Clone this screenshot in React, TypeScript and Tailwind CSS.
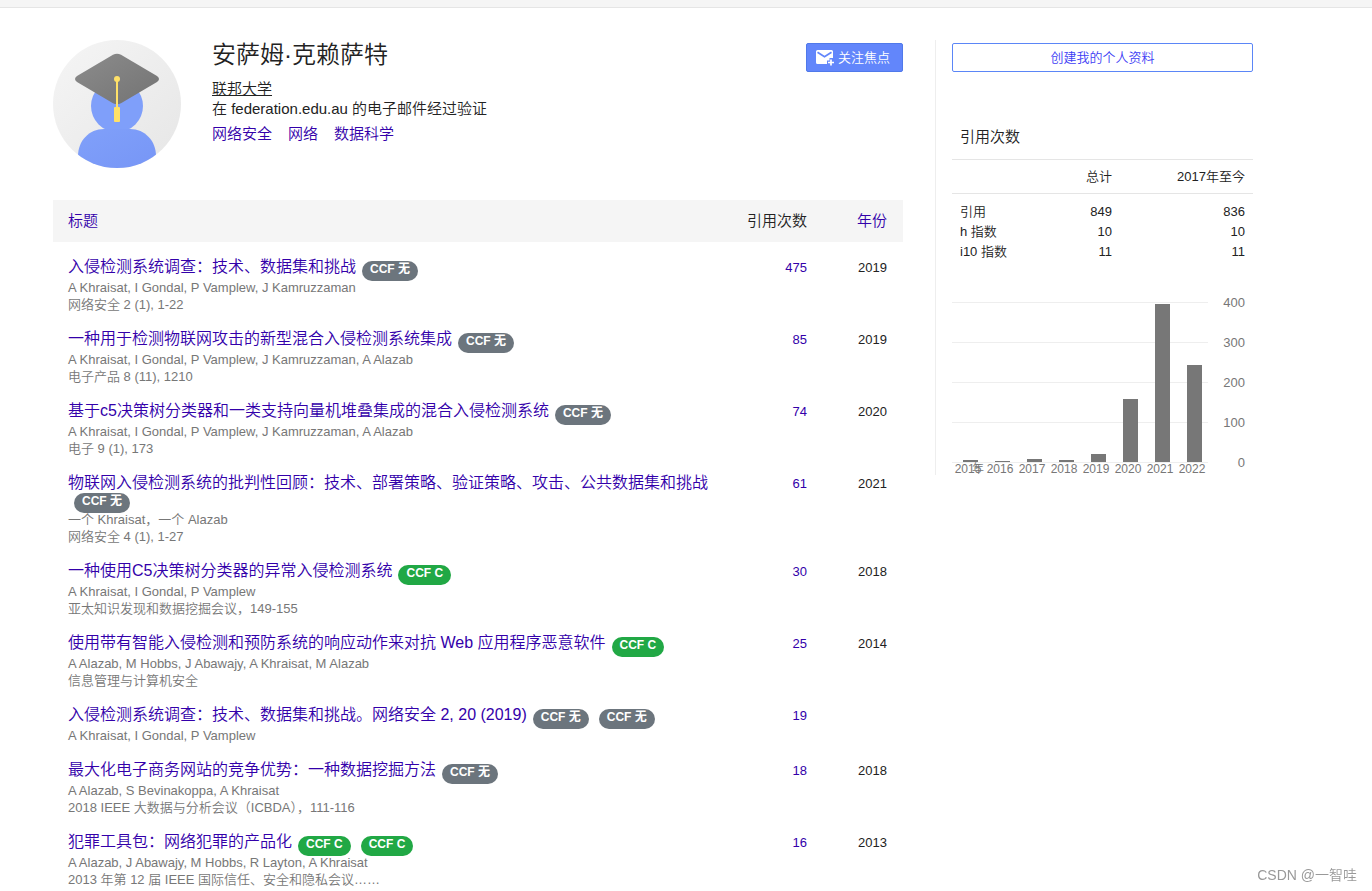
import React from 'react';
import clsx from 'clsx';

interface Article {
  title: string;
  authors: string;
  venue?: string;
  ranks: string[];
  cites: number;
  year?: number;
}

const articles: Article[] = [
  { title: '入侵检测系统调查：技术、数据集和挑战', authors: 'A Khraisat, I Gondal, P Vamplew, J Kamruzzaman', venue: '网络安全 2 (1), 1-22', ranks: ['无'], cites: 475, year: 2019 },
  { title: '一种用于检测物联网攻击的新型混合入侵检测系统集成', authors: 'A Khraisat, I Gondal, P Vamplew, J Kamruzzaman, A Alazab', venue: '电子产品 8 (11), 1210', ranks: ['无'], cites: 85, year: 2019 },
  { title: '基于c5决策树分类器和一类支持向量机堆叠集成的混合入侵检测系统', authors: 'A Khraisat, I Gondal, P Vamplew, J Kamruzzaman, A Alazab', venue: '电子 9 (1), 173', ranks: ['无'], cites: 74, year: 2020 },
  { title: '物联网入侵检测系统的批判性回顾：技术、部署策略、验证策略、攻击、公共数据集和挑战', authors: '一个 Khraisat，一个 Alazab', venue: '网络安全 4 (1), 1-27', ranks: ['无'], cites: 61, year: 2021 },
  { title: '一种使用C5决策树分类器的异常入侵检测系统', authors: 'A Khraisat, I Gondal, P Vamplew', venue: '亚太知识发现和数据挖掘会议，149-155', ranks: ['C'], cites: 30, year: 2018 },
  { title: '使用带有智能入侵检测和预防系统的响应动作来对抗 Web 应用程序恶意软件', authors: 'A Alazab, M Hobbs, J Abawajy, A Khraisat, M Alazab', venue: '信息管理与计算机安全', ranks: ['C'], cites: 25, year: 2014 },
  { title: '入侵检测系统调查：技术、数据集和挑战。网络安全 2, 20 (2019)', authors: 'A Khraisat, I Gondal, P Vamplew', ranks: ['无', '无'], cites: 19 },
  { title: '最大化电子商务网站的竞争优势：一种数据挖掘方法', authors: 'A Alazab, S Bevinakoppa, A Khraisat', venue: '2018 IEEE 大数据与分析会议（ICBDA），111-116', ranks: ['无'], cites: 18, year: 2018 },
  { title: '犯罪工具包：网络犯罪的产品化', authors: 'A Alazab, J Abawajy, M Hobbs, R Layton, A Khraisat', venue: '2013 年第 12 届 IEEE 国际信任、安全和隐私会议……', ranks: ['C', 'C'], cites: 16, year: 2013 },
];

const interests = ['网络安全', '网络', '数据科学'];

const metrics = [
  { label: '引用', total: 849, recent: 836 },
  { label: 'h 指数', total: 10, recent: 10 },
  { label: 'i10 指数', total: 11, recent: 11 },
];

const perYear = [
  { year: 2015, count: 5 },
  { year: 2016, count: 3 },
  { year: 2017, count: 8 },
  { year: 2018, count: 5 },
  { year: 2019, count: 20 },
  { year: 2020, count: 158 },
  { year: 2021, count: 395 },
  { year: 2022, count: 243 },
];

const ticks = [400, 300, 200, 100, 0];

const Avatar: React.FC = () => (
  <svg viewBox="0 0 128 128" className="size-32 shrink-0" aria-hidden="true">
    <defs>
      <linearGradient id="bg" x1="0" y1="0" x2="1" y2="1">
        <stop offset="0" stopColor="#f5f5f5" />
        <stop offset="1" stopColor="#e6e6e6" />
      </linearGradient>
      <linearGradient id="hat" x1="0" y1="0" x2="1" y2="1">
        <stop offset="0" stopColor="#8c8c8c" />
        <stop offset="1" stopColor="#737373" />
      </linearGradient>
      <linearGradient id="body" x1="0" y1="0" x2="1" y2="1">
        <stop offset="0" stopColor="#80a0fa" />
        <stop offset="1" stopColor="#7796f6" />
      </linearGradient>
      <clipPath id="round">
        <circle cx="64" cy="64" r="64" />
      </clipPath>
    </defs>
    <g clipPath="url(#round)">
      <rect width="128" height="128" fill="url(#bg)" />
      <circle cx="64" cy="66" r="26" fill="#7f9ffa" />
      <path d="M25 128V116C25 101 36 89 51 89H77C92 89 103 101 103 116V128Z" fill="url(#body)" />
      <path d="M60 14.700Q64 12.800 68 14.700L104 36Q108 39 104 42L68 63.300Q64 65.200 60 63.300L24 42Q20 39 24 36Z" fill="url(#hat)" />
      <path d="M64 39V70" stroke="#ffe168" strokeWidth="2" />
      <circle cx="64" cy="39" r="3" fill="#ffe168" />
      <rect x="61" y="67" width="6" height="15" rx="1" fill="#ffe168" />
    </g>
  </svg>
);

const MailPlusIcon: React.FC = () => (
  <svg viewBox="0 0 18 16" className="h-4 w-[18px]" aria-hidden="true">
    <path d="M1.500 0H15.500Q17 0 17 1.500V8H13.500V10.500H11V14H1.500Q0 14 0 12.500V1.500Q0 0 1.500 0Z" fill="#fff" />
    <path d="M1.500 2.200L8.500 6.800L15.500 2.200" fill="none" stroke="#6286fb" strokeWidth="1.700" />
    <path d="M15 9.500V15.500M12 12.500H18" stroke="#fff" strokeWidth="1.700" />
  </svg>
);

const RankBadge: React.FC<{ rank: string }> = ({ rank }) => (
  <span
    className={clsx(
      'mt-0.5 mr-1 -mb-1.5 ml-1.5 inline-block h-5 rounded-[10px] px-2 align-top text-xs leading-4 font-bold text-white',
      rank === '无' ? 'bg-[#6c757d]' : 'bg-[#21a845]'
    )}
  >
    CCF {rank}
  </span>
);

const ArticleTable: React.FC = () => (
  <table className="mt-8 w-full table-fixed text-[13px]">
    <thead className="h-[42px] bg-[#f5f5f5] text-[15px]">
      <tr>
        <th className="pl-[15px] text-left font-[350]">
          <a href="#title" className="text-[#3300aa]">标题</a>
        </th>
        <th className="w-24 pr-4 text-right font-[350]">引用次数</th>
        <th className="w-20 pr-4 text-right font-[350]">
          <a href="#year" className="text-[#3300aa]">年份</a>
        </th>
      </tr>
    </thead>
    <tbody>
      {articles.map((article, i) => (
        <tr key={i} className="align-top">
          <td className="pt-[17px] pb-px pl-[15px] text-[#777]">
            <div className="text-base leading-4">
              <a href="#article" className="text-[#3300aa]">{article.title}</a>
              {article.ranks.map((rank, j) => (
                <RankBadge key={j} rank={rank} />
              ))}
            </div>
            <div className="mt-[5px] leading-4">{article.authors}</div>
            {article.venue && <div className="leading-[17px]">{article.venue}</div>}
          </td>
          <td className="pt-[18px] pr-4 text-right leading-4">
            <a href="#cites" className="text-[#3300aa]">{article.cites}</a>
          </td>
          <td className="pt-[18px] pr-4 text-right leading-4">{article.year}</td>
        </tr>
      ))}
    </tbody>
  </table>
);

const CitationChart: React.FC = () => (
  <div className="mt-10 flex justify-between pr-2 text-[#777]">
    <div className="w-64">
      <svg viewBox="0 0 256 161" className="block h-[161px] w-64" shapeRendering="crispEdges" aria-hidden="true">
        {ticks.map(tick => (
          <rect key={tick} x="0" y={160 - tick * 0.4} width="256" height="1" fill="#eee" />
        ))}
        {perYear.map(({ year, count }, i) => {
          const height = Math.round(count * 0.4);
          return <rect key={year} x={11 + i * 32} y={160 - height} width="15" height={height} fill="#777" />;
        })}
      </svg>
      <div className="flex text-xs leading-3">
        {perYear.map(({ year }, i) => (
          <span key={year} className="relative w-8 text-center">
            {year}
            {i === 0 && <span className="absolute top-0 right-0">年</span>}
          </span>
        ))}
      </div>
    </div>
    <div className="-mt-[7px] flex flex-col gap-6 text-right text-[13px] leading-4">
      {ticks.map(tick => (
        <span key={tick}>{tick}</span>
      ))}
    </div>
  </div>
);

const Sidebar: React.FC = () => (
  <aside className="w-[318px] shrink-0 self-start border-l border-[#eee] pt-[3px] pl-4">
    <button
      type="button"
      className="h-[29px] w-full rounded-xs border border-[#5b86f7] text-[13px] leading-4 text-[#4040f5]"
    >
      创建我的个人资料
    </button>
    <h2 className="mt-[55px] pl-2 text-[15px] leading-5 font-[350]">引用次数</h2>
    <table className="mt-3 w-full text-[13px] leading-5">
      <thead className="h-[34px] border-y border-[#e5e5e5]">
        <tr>
          <th></th>
          <th className="text-right font-[350]">总计</th>
          <th className="w-[141px] pr-2 text-right font-[350]">2017年至今</th>
        </tr>
      </thead>
      <tbody className="before:block before:h-2">
        {metrics.map(({ label, total, recent }) => (
          <tr key={label}>
            <td className="pl-2">{label}</td>
            <td className="text-right">{total}</td>
            <td className="pr-2 text-right">{recent}</td>
          </tr>
        ))}
      </tbody>
    </table>
    <CitationChart />
  </aside>
);

const App: React.FC = () => (
  <div className="bg-white font-['Liberation_Sans','Noto_Sans_CJK_SC',sans-serif] font-[350] text-[#222]" lang="zh-CN">
    <div className="h-2 border-b border-[#e5e5e5] bg-[#f5f5f5]" />
    <div className="mt-8 ml-[53px] flex max-w-[1200px] gap-8">
      <main className="min-w-0 flex-1">
        <header className="flex items-start">
          <Avatar />
          <div className="ml-[31px] flex-1 text-[15px] leading-5">
            <h1 className="text-2xl leading-[30px] font-[350]">安萨姆·克赖萨特</h1>
            <div className="mt-[9px]">
              <a href="#org" className="underline">联邦大学</a>
            </div>
            <div>在 federation.edu.au 的电子邮件经过验证</div>
            <div className="mt-[5px] flex gap-4">
              {interests.map(interest => (
                <a key={interest} href="#interest" className="text-[#3300aa]">{interest}</a>
              ))}
            </div>
          </div>
          <button
            type="button"
            className="mt-[3px] flex h-[29px] w-[97px] items-center gap-1 rounded-xs border border-[#5079ea] bg-[#6286fb] pl-[9px] text-[13px] text-white"
          >
            <MailPlusIcon />
            关注焦点
          </button>
        </header>
        <ArticleTable />
      </main>
      <Sidebar />
    </div>
    <div className="fixed right-[15px] bottom-2 text-sm leading-4 text-[#999]">CSDN @一智哇</div>
  </div>
);

export default App;
